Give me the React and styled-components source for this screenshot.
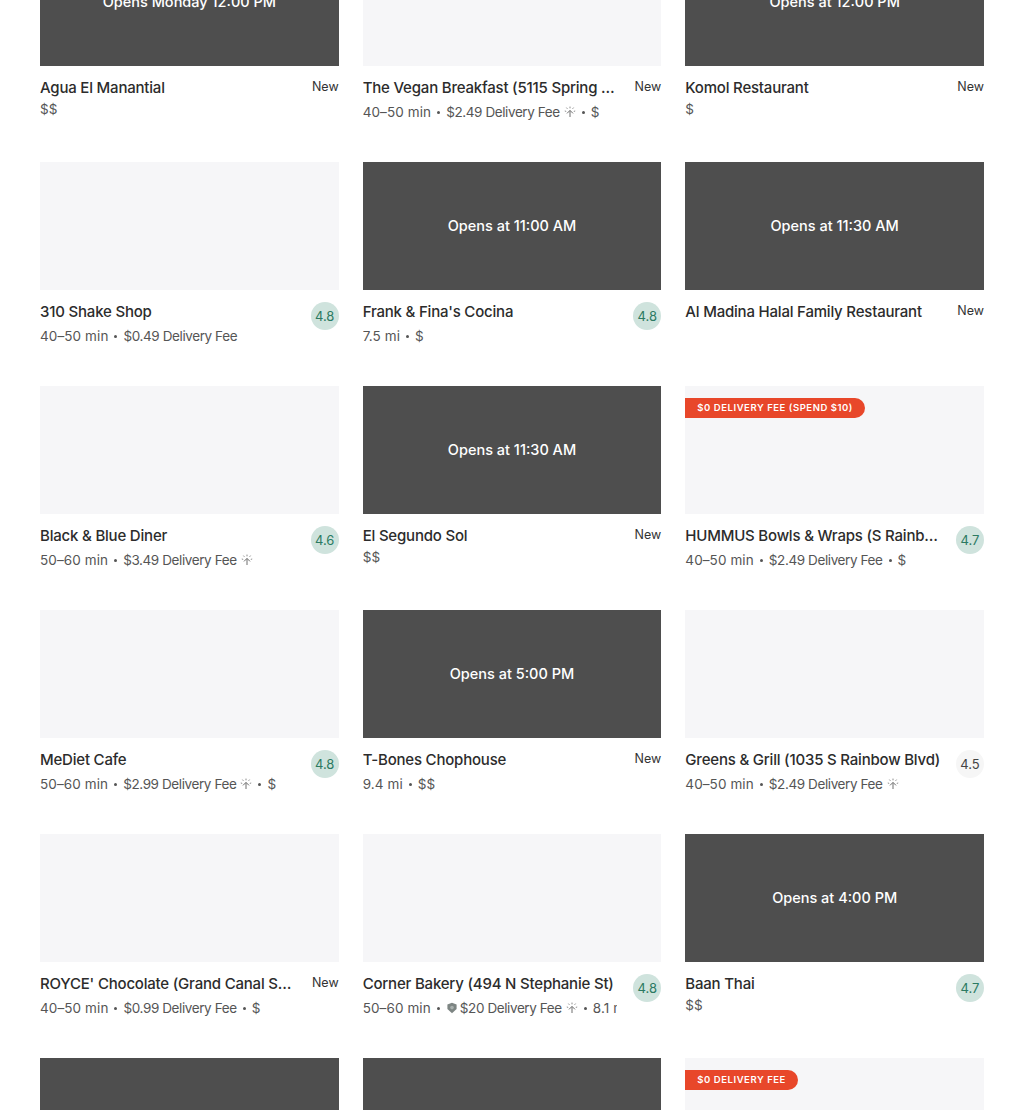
import React from 'react';
import styled, { createGlobalStyle } from 'styled-components';

const GlobalStyle = createGlobalStyle`
    html, body {
        margin: 0;
        padding: 0;
        background: #fff;
        height: 1110px;
        overflow: hidden;
    }
    body {
        font-family: "Inter", "Liberation Sans", sans-serif;
    }
`;

const Page = styled.div`
    width: 1024px;
    height: 1110px;
    overflow: hidden;
`;

const Grid = styled.div`
    display: grid;
    grid-template-columns: repeat(3, 1fr);
    grid-auto-rows: 184px;
    column-gap: 24px;
    row-gap: 40px;
    padding: 0 40px;
    margin-top: -62px;
`;

const Card = styled.div`
    min-width: 0;
`;

const Thumb = styled.div`
    position: relative;
    height: 128px;
    display: flex;
    align-items: center;
    justify-content: center;
    background: ${props => (props.$closed ? '#4e4e4e' : '#f6f6f8')};
`;

const ClosedLabel = styled.span`
    color: #fff;
    font-size: 14.5px;
    font-weight: 500;
    padding-bottom: 2px;
`;

const Promo = styled.span`
    position: absolute;
    top: 12px;
    left: 0;
    height: 19px;
    padding: 0 12px 1px;
    display: flex;
    align-items: center;
    border-radius: 0 10px 10px 0;
    background: #e8472a;
    color: #fff;
    font-size: 9.5px;
    font-weight: 600;
    letter-spacing: 0.55px;
    text-transform: uppercase;
`;

const Info = styled.div`
    display: flex;
    margin-top: 12px;
`;

const Text = styled.div`
    flex: 1;
    min-width: 0;
`;

const Name = styled.div`
    height: 20px;
    line-height: 20px;
    margin-right: -3px;
    font-size: 15px;
    font-weight: 500;
    letter-spacing: -0.2px;
    color: #2c2c2c;
    white-space: nowrap;
    overflow: hidden;
    text-overflow: ellipsis;
`;

const Meta = styled.div`
    display: flex;
    align-items: center;
    height: 20px;
    margin-top: ${props => (props.$tight ? '1px' : '4px')};
    font-size: 13.5px;
    color: #555;
    white-space: nowrap;
    overflow: hidden;
`;

const Part = styled.span`
    flex: none;
    letter-spacing: ${props => (props.$fee ? '-0.4px' : '0.1px')};
`;

const Dot = styled.span`
    flex: none;
    width: 3px;
    height: 3px;
    margin: 0 6px;
    border-radius: 50%;
    background: #555;
`;

const Side = styled.div`
    flex: none;
    width: 44px;
    display: flex;
    justify-content: flex-end;
    align-items: flex-start;
`;

const NewLabel = styled.span`
    font-size: 12.5px;
    font-weight: 400;
    line-height: 18px;
    color: #333;
`;

const Rating = styled.span`
    width: 28px;
    height: 27px;
    padding-bottom: 1px;
    display: flex;
    align-items: center;
    justify-content: center;
    border-radius: 50%;
    font-size: 13px;
    font-weight: 400;
    background: ${props => (props.$muted ? '#f6f6f6' : '#cfe3dd')};
    color: ${props => (props.$muted ? '#444' : '#2b7a62')};
`;

const IconWrap = styled.svg`
    flex: none;
    margin-left: 4px;
`;

const ShieldWrap = styled.svg`
    flex: none;
    margin-right: 2px;
`;

const BoostIcon = () => (
    <IconWrap width="12" height="12" viewBox="0 0 12 12" fill="none" stroke="#6e6e6e" strokeWidth="1">
        <path d="M6 11V4.6M3 7.4 6 4.4 9 7.4" />
        <path d="M6 .6v1.7M2.4 1.6l1 1.2M9.6 1.6l-1 1.2M.8 5l1.4.4M11.2 5l-1.4.4" strokeWidth="0.8" />
    </IconWrap>
);

const ShieldIcon = () => (
    <ShieldWrap width="12" height="12" viewBox="0 0 12 12">
        <path d="M6 .8 10.6 2.6 10.6 7 6 11.2 1.4 7 1.4 2.6Z" fill="#7d8583" />
        <circle cx="6" cy="5.6" r="1.8" fill="#a9b0ae" />
    </ShieldWrap>
);

const restaurants = [
    { name: 'Agua El Manantial', closed: 'Opens Monday 12:00 PM', isNew: true, meta: [['$$']] },
    { name: 'The Vegan Breakfast (5115 Spring Mountain Rd)', isNew: true, meta: [['40–50 min'], ['$2.49 Delivery Fee', 'boost'], ['$']] },
    { name: 'Komol Restaurant', closed: 'Opens at 12:00 PM', isNew: true, meta: [['$']] },
    { name: '310 Shake Shop', rating: '4.8', meta: [['40–50 min'], ['$0.49 Delivery Fee']] },
    { name: "Frank & Fina's Cocina", closed: 'Opens at 11:00 AM', rating: '4.8', meta: [['7.5 mi'], ['$']] },
    { name: 'Al Madina Halal Family Restaurant', closed: 'Opens at 11:30 AM', isNew: true, meta: [] },
    { name: 'Black & Blue Diner', rating: '4.6', meta: [['50–60 min'], ['$3.49 Delivery Fee', 'boost']] },
    { name: 'El Segundo Sol', closed: 'Opens at 11:30 AM', isNew: true, meta: [['$$']] },
    { name: 'HUMMUS Bowls & Wraps (S Rainbow Blvd)', promo: '$0 Delivery Fee (Spend $10)', rating: '4.7', meta: [['40–50 min'], ['$2.49 Delivery Fee'], ['$']] },
    { name: 'MeDiet Cafe', rating: '4.8', meta: [['50–60 min'], ['$2.99 Delivery Fee', 'boost'], ['$']] },
    { name: 'T-Bones Chophouse', closed: 'Opens at 5:00 PM', isNew: true, meta: [['9.4 mi'], ['$$']] },
    { name: 'Greens & Grill (1035 S Rainbow Blvd)', rating: '4.5', muted: true, meta: [['40–50 min'], ['$2.49 Delivery Fee', 'boost']] },
    { name: "ROYCE' Chocolate (Grand Canal Shoppes)", isNew: true, meta: [['40–50 min'], ['$0.99 Delivery Fee'], ['$']] },
    { name: 'Corner Bakery (494 N Stephanie St)', rating: '4.8', meta: [['50–60 min'], ['$20 Delivery Fee', 'boost', 'shield'], ['8.1 mi']] },
    { name: 'Baan Thai', closed: 'Opens at 4:00 PM', rating: '4.7', meta: [['$$']] },
    { name: 'Opening soon', closed: ' ', meta: [] },
    { name: 'Opening soon', closed: ' ', meta: [] },
    { name: 'Free delivery', promo: '$0 Delivery Fee', meta: [] },
];

function App() {
    return (
        <Page>
            <GlobalStyle />
            <Grid>
                {restaurants.map((item, index) => (
                    <Card key={index}>
                        <Thumb $closed={!!item.closed}>
                            {item.closed && <ClosedLabel>{item.closed}</ClosedLabel>}
                            {item.promo && <Promo>{item.promo}</Promo>}
                        </Thumb>
                        <Info>
                            <Text>
                                <Name>{item.name}</Name>
                                {item.meta.length > 0 && (
                                    <Meta $tight={item.meta.length === 1}>
                                        {item.meta.map((part, i) => (
                                            <React.Fragment key={i}>
                                                {i > 0 && <Dot />}
                                                {part[2] === 'shield' && <ShieldIcon />}
                                                <Part $fee={part[0].includes('Fee')}>{part[0]}</Part>
                                                {part[1] === 'boost' && <BoostIcon />}
                                            </React.Fragment>
                                        ))}
                                    </Meta>
                                )}
                            </Text>
                            <Side>
                                {item.isNew && <NewLabel>New</NewLabel>}
                                {item.rating && <Rating $muted={item.muted}>{item.rating}</Rating>}
                            </Side>
                        </Info>
                    </Card>
                ))}
            </Grid>
        </Page>
    );
}

export default App;
